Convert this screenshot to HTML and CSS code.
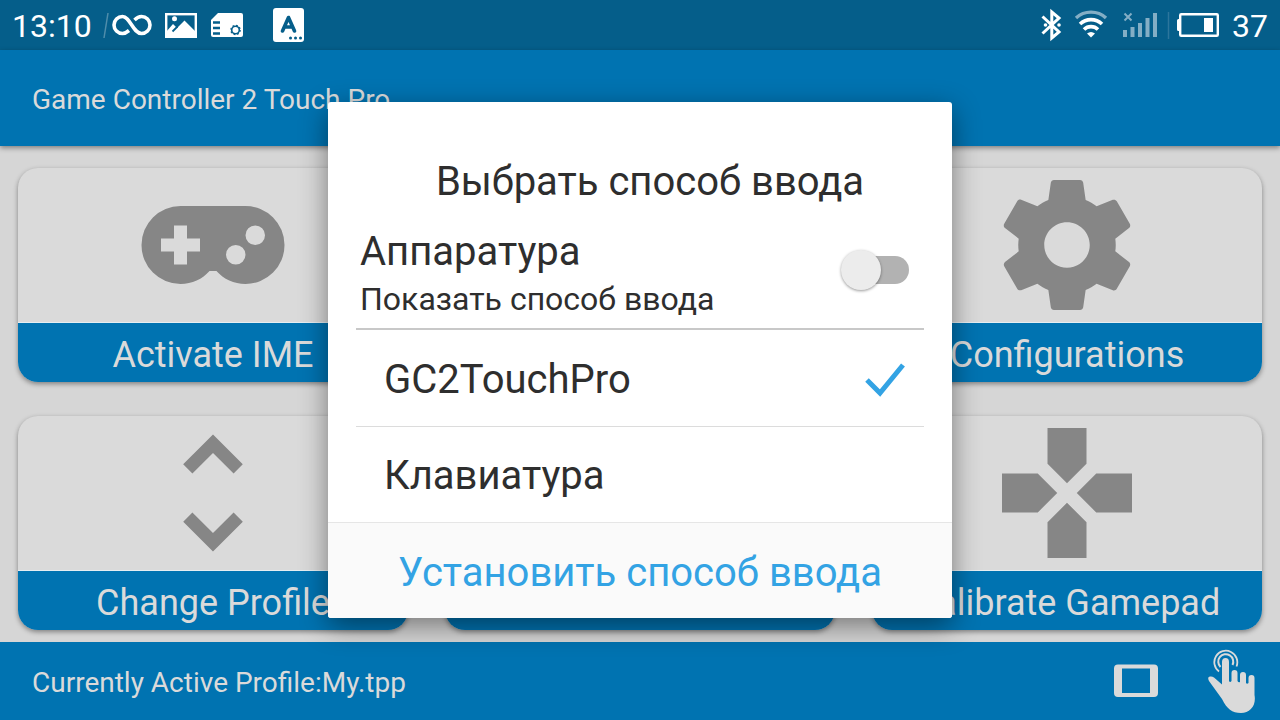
FILE: index.html
```html
<!DOCTYPE html>
<html lang="ru">
<head>
<meta charset="utf-8">
<meta name="viewport" content="width=device-width, initial-scale=1">
<title>Game Controller 2 Touch Pro</title>
<link rel="stylesheet" href="styles.css">
</head>
<body>
<div class="screen">
  <div class="status">
    <time class="status-text">13:10</time>
    <svg class="status-left" viewBox="100 0 206 50" width="206" height="50" aria-hidden="true">
      <path d="M108 13L104 38" stroke="#4f8dab" stroke-width="1.5"/>
      <g fill="none" stroke="#fff" stroke-width="3.6">
        <path d="M129 30.500C126 33 124 33.500 122.500 33.500a8.500 8.500 0 1 1 0-17C130 16.500 133 33.500 141.500 33.500a8.500 8.500 0 1 0 0-17C138.500 16.500 136.500 18 134.500 20"/>
      </g>
      <rect x="166.200" y="14.200" width="29.600" height="22.600" fill="none" stroke="#fff" stroke-width="2.400"/>
      <circle cx="174.500" cy="18.800" r="2.500" fill="#fff"/>
      <path d="M166 32l7-8 4 4 7.500-7.500L196 32v5h-30z" fill="#fff"/>
      <path d="M172.500 31.500l5-5" stroke="#055e8a" stroke-width="1.800"/>
      <path d="M218 13h23q2 0 2 2v20q0 2-2 2h-28q-2 0-2-2V20z" fill="#fff"/>
      <path d="M213 22.500h7M213 28h7M213 33.500h7" stroke="#055e8a" stroke-width="2.400"/>
      <circle cx="235.500" cy="30" r="3.800" fill="none" stroke="#055e8a" stroke-width="1.600"/>
      <circle cx="235.500" cy="30" r="4.700" fill="none" stroke="#055e8a" stroke-width="1.200" stroke-dasharray="1.800 1.890"/>
      <rect x="273" y="8" width="31" height="34" rx="3" fill="#fff"/>
      <path d="M282.500 31L288.500 17.500L294.500 31M285 27h7" fill="none" stroke="#055e8a" stroke-width="3.600" stroke-linecap="round" stroke-linejoin="round"/>
      <path d="M290.500 38h.01M295.500 38h.01M300.500 38h.01" stroke="#055e8a" stroke-width="3" stroke-linecap="round"/>
    </svg>
    <span class="spacer"></span>
    <svg class="status-right" viewBox="1038 0 182 50" width="182" height="50" aria-hidden="true">
      <path d="M1042.500 16.500L1059 32L1051.800 38V12L1059 18L1042.500 33.500" fill="none" stroke="#fff" stroke-width="3"/>
      <circle cx="1045.500" cy="25" r="1.800" fill="#fff"/><circle cx="1059" cy="25" r="1.800" fill="#fff"/>
      <path d="M1076 18a22 22 0 0 1 30 0" fill="none" stroke="#83aec5" stroke-width="3.400"/>
      <path d="M1080 24a16 16 0 0 1 22 0M1084 29.500a10 10 0 0 1 14 0" fill="none" stroke="#fff" stroke-width="3.600"/>
      <path d="M1087 33.500q4-3 8 0l-4 4z" fill="#fff"/>
      <path d="M1124.500 13.500l7 7m0-7l-7 7" stroke="#83aec5" stroke-width="2"/>
      <path d="M1123 30h4v7h-4zM1130.500 27h4v10h-4zM1138 23h4v14h-4zM1145.500 18h4v19h-4zM1153 13h4v24h-4z" fill="#83aec5"/>
      <path d="M1168.500 12v27" stroke="#2c769c" stroke-width="1.500"/>
      <rect x="1180.200" y="14.200" width="37.600" height="21.600" rx="1" fill="none" stroke="#fff" stroke-width="2.400"/>
      <path d="M1180 19h-1.500q-1.500 0-1.500 1.500v9q0 1.500 1.500 1.500h1.500zM1204 18h9v14h-9z" fill="#fff"/>
    </svg>
    <span class="status-text">37</span>
  </div>

  <header class="appbar"><h1 class="bar-text">Game Controller 2 Touch Pro</h1></header>

  <main class="grid">
    <button class="card" type="button">
      <span class="card-art"><svg class="card-icon" viewBox="0 0 24 24" aria-hidden="true"><path d="M7,6H17A6,6 0 0,1 23,12A6,6 0 0,1 17,18C15.220,18 13.630,17.230 12.530,16H11.470C10.370,17.230 8.780,18 7,18A6,6 0 0,1 1,12A6,6 0 0,1 7,6M6,9V11H4V13H6V15H8V13H10V11H8V9H6M15.500,12A1.500,1.500 0 0,0 14,13.500A1.500,1.500 0 0,0 15.500,15A1.500,1.500 0 0,0 17,13.500A1.500,1.500 0 0,0 15.500,12M18.500,9A1.500,1.500 0 0,0 17,10.500A1.500,1.500 0 0,0 18.500,12A1.500,1.500 0 0,0 20,10.500A1.500,1.500 0 0,0 18.500,9Z"/></svg></span>
      <span class="card-label">Activate IME</span>
    </button>
    <div class="card"><span class="card-art"></span><span class="card-label"></span></div>
    <button class="card" type="button">
      <span class="card-art"><svg class="card-icon" viewBox="0 0 24 24" aria-hidden="true"><path d="M19.430 12.980c.04-.32.07-.64.07-.98s-.03-.66-.07-.98l2.110-1.650c.19-.15.24-.42.12-.64l-2-3.460c-.12-.22-.39-.3-.61-.22l-2.490 1c-.52-.4-1.080-.73-1.690-.98l-.38-2.650C14.460 2.180 14.250 2 14 2h-4c-.25 0-.46.18-.49.42l-.38 2.650c-.61.25-1.170.59-1.690.98l-2.490-1c-.23-.09-.49 0-.61.22l-2 3.460c-.13.22-.07.49.12.64l2.110 1.650c-.04.32-.07.65-.07.98s.03.66.07.98l-2.110 1.650c-.19.15-.24.42-.12.64l2 3.460c.12.22.39.3.61.22l2.490-1c.52.4 1.080.73 1.690.98l.38 2.650c.03.24.24.42.49.42h4c.25 0 .46-.18.49-.42l.38-2.650c.61-.25 1.170-.59 1.690-.98l2.490 1c.23.09.49 0 .61-.22l2-3.460c.12-.22.07-.49-.12-.64l-2.110-1.650zM12 15.500c-1.930 0-3.500-1.570-3.500-3.500s1.570-3.500 3.500-3.500 3.500 1.570 3.500 3.500-1.570 3.500-3.500 3.500z"/></svg></span>
      <span class="card-label">Configurations</span>
    </button>
    <button class="card" type="button">
      <span class="card-art"><svg class="card-icon" viewBox="0 0 24 24" aria-hidden="true"><path d="M12 5.830L15.170 9l1.410-1.410L12 3 7.410 7.590 8.830 9 12 5.830zm0 12.340L8.830 15l-1.410 1.410L12 21l4.590-4.590L15.170 15 12 18.170z"/></svg></span>
      <span class="card-label">Change Profile</span>
    </button>
    <div class="card"><span class="card-art"></span><span class="card-label"></span></div>
    <button class="card" type="button">
      <span class="card-art"><svg class="card-icon" viewBox="0 0 24 24" aria-hidden="true"><path d="M15 7.500V2H9v5.500l3 3 3-3zM7.500 9H2v6h5.500l3-3-3-3zM9 16.500V22h6v-5.500l-3-3-3 3zM16.500 9l-3 3 3 3H22V9h-5.500z"/></svg></span>
      <span class="card-label">Calibrate Gamepad</span>
    </button>
  </main>

  <footer class="footer">
    <p class="bar-text">Currently Active Profile:My.tpp</p>
    <div class="footer-actions">
      <button class="icon-button" type="button" aria-label="Tablet">
        <svg viewBox="0 0 44 64" width="44" height="64"><path fill-rule="evenodd" d="M4 15.500h36q4 0 4 4V44q0 4-4 4H4q-4 0-4-4V19.500q0-4 4-4zM8 19.500V44h28V19.500z"/></svg>
      </button>
      <button class="icon-button" type="button" aria-label="Touch">
        <svg viewBox="0 0 50 64" width="50" height="64">
          <g fill="none" stroke="#dadada"><path d="M11 22.500A11.500 11.500 0 1 1 28.500 17.500" stroke-width="1.800"/><path d="M12.500 18A7.500 7.500 0 1 1 24.500 16" stroke-width="2"/></g>
          <path d="M14 13q0-4 3.500-4t3.500 4V32q1 2 2.500 0V24q0-3 3-3t3 3v8q1 2 2.500 1V26q0-3 3-3t3 3v8q1 1.500 2.500 0v-5q0-3 3-3t3 3V46C48.500 57 42 64 33 64 24 64 19 60 14 50L1 32q-2-4 1-4.500 2-.5 4 1l8 7z"/>
        </svg>
      </button>
    </div>
  </footer>

  <div class="overlay">
    <section class="dialog" role="dialog" aria-labelledby="dialog-title">
      <h2 class="dialog-title" id="dialog-title">Выбрать способ ввода</h2>
      <label class="hardware">
        <span class="hardware-text">
          <span class="item-text">Аппаратура</span>
          <span class="item-note">Показать способ ввода</span>
        </span>
        <input class="switch" type="checkbox" role="switch">
      </label>
      <div class="options">
        <label class="option">
          <span class="item-text">GC2TouchPro</span>
          <input class="option-radio" type="radio" name="ime" checked>
          <svg class="check" viewBox="0 0 40 34" width="40" height="34" aria-hidden="true"><path d="M2 17L15 30L38 2"/></svg>
        </label>
        <label class="option">
          <span class="item-text">Клавиатура</span>
          <input class="option-radio" type="radio" name="ime">
          <svg class="check" viewBox="0 0 40 34" width="40" height="34" aria-hidden="true"><path d="M2 17L15 30L38 2"/></svg>
        </label>
      </div>
      <button class="dialog-action" type="button">Установить способ ввода</button>
    </section>
  </div>
</div>
</body>
</html>
```

FILE: styles.css
```css
* {
  box-sizing: border-box;
}

body {
  margin: 0;
  font-family: Roboto, "Noto Sans", sans-serif;
  background: #d6d6d6;
}

h1, h2, p {
  margin: 0;
  font-weight: 400;
}

button {
  border: 0;
  padding: 0;
  font: inherit;
  background: none;
  cursor: pointer;
}

.screen {
  position: relative;
  min-height: 100vh;
  display: flex;
  flex-direction: column;
}

.status {
  display: flex;
  align-items: center;
  height: 50px;
  padding: 0 12px;
  background: #055e8a;
  color: #fff;
}

.status-text {
  padding-top: 2px;
  font-size: 32px;
  line-height: 48px;
}

.status-left {
  margin-left: 8px;
}

.status-right {
  margin-right: 12px;
}

.spacer {
  flex: 1;
}

.appbar {
  position: relative;
  display: flex;
  align-items: center;
  height: 96px;
  padding: 0 32px;
  background: #0073b1;
  box-shadow: 0 2px 5px rgba(0, 0, 0, 0.4);
}

.bar-text {
  padding-top: 4px;
  font-size: 28px;
  line-height: 36px;
  color: #dadada;
}

.grid {
  flex: 1;
  display: grid;
  grid-template-columns: repeat(3, 1fr);
  grid-auto-rows: minmax(0, 1fr);
  gap: 34px 37px;
  padding: 22px 18px 12px;
}

.card {
  display: flex;
  flex-direction: column;
  overflow: hidden;
  border-radius: 20px;
  background: #dadada;
  box-shadow: 0 2px 5px rgba(0, 0, 0, 0.4);
}

.card-art {
  flex: 1;
  width: 100%;
  min-height: 154px;
  max-height: 100%;
  display: flex;
  align-items: center;
  justify-content: center;
}

.card-icon {
  width: 156px;
  height: 156px;
  margin: -1px 0;
  fill: #868686;
}

.card-label {
  width: 100%;
  height: 60px;
  border-top: 1px solid #e6eef2;
  background: #0073b1;
  color: #dadada;
  font-size: 36px;
  line-height: 64px;
  text-align: center;
  white-space: nowrap;
}

.footer {
  display: flex;
  align-items: center;
  justify-content: space-between;
  height: 78px;
  padding: 0 22px 0 32px;
  background: #0073b1;
}

.footer-actions {
  display: flex;
  gap: 50px;
}

.icon-button {
  display: flex;
  fill: #dadada;
}

.overlay {
  position: absolute;
  inset: 0;
  display: flex;
  align-items: center;
  justify-content: center;
}

.dialog {
  width: 624px;
  max-width: 94%;
  overflow: hidden;
  border-radius: 3px;
  background: #fff;
  color: #2e2e2e;
  box-shadow: 0 8px 28px rgba(0, 0, 0, 0.45);
}

.dialog-title {
  padding: 55px 0 21px 20px;
  font-size: 40px;
  line-height: 50px;
  text-align: center;
}

.hardware {
  display: flex;
  align-items: center;
  justify-content: space-between;
  margin: 0 28px;
  padding: 0 15px 6px 4px;
  border-bottom: 2px solid #c8c8c8;
}

.hardware-text {
  display: flex;
  flex-direction: column;
}

.item-text {
  font-size: 40px;
  line-height: 48px;
}

.item-note {
  font-size: 32px;
  line-height: 46px;
}

.switch {
  appearance: none;
  position: relative;
  width: 64px;
  height: 28px;
  margin: 0 0 10px;
  border-radius: 14px;
  background: #b2b2b2;
}

.switch::before {
  content: "";
  position: absolute;
  left: -4px;
  top: -6px;
  width: 40px;
  height: 40px;
  border-radius: 50%;
  background: #ececec;
  box-shadow: 0 1px 3px rgba(0, 0, 0, 0.4);
}

.switch:checked::before {
  left: 28px;
}

.options {
  padding: 0 28px;
}

.option {
  display: flex;
  align-items: center;
  justify-content: space-between;
  height: 96px;
  padding: 3px 19px 0 28px;
}

.option + .option {
  border-top: 1px solid #dcdcdc;
}

.option-radio {
  appearance: none;
  width: 0;
  height: 0;
  margin: 0;
}

.check {
  display: none;
  fill: none;
  stroke: #33a3e4;
  stroke-width: 5;
}

.option-radio:checked + .check {
  display: block;
}

.dialog-action {
  display: block;
  width: 100%;
  height: 96px;
  padding-top: 4px;
  border-top: 1px solid #e6e6e6;
  background: #fafafa;
  color: #33a3e4;
  font-size: 40px;
}
```
